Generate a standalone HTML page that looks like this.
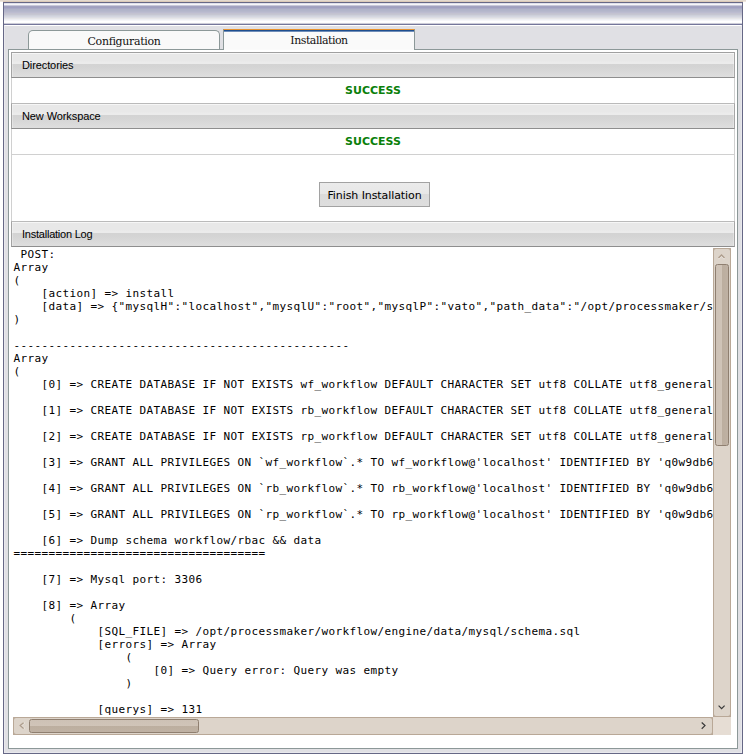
<!DOCTYPE html>
<html>
<head>
<meta charset="utf-8">
<title>Installation</title>
<style>
html,body{margin:0;padding:0;background:#fff;}
body{width:746px;height:756px;position:relative;overflow:hidden;font-family:"Liberation Sans","DejaVu Sans",sans-serif;}
.abs{position:absolute;box-sizing:border-box;}
#topstrip{left:0;top:0;width:746px;height:2px;background:linear-gradient(to bottom,#e4dad0 0,#e4dad0 1px,#dccab8 1px,#dccab8 2px);}
#win{left:3px;top:2px;width:740px;height:752px;border:1px solid #666886;background:#e0e0e4;}
#title{left:4px;top:3px;width:738px;height:21px;background:linear-gradient(to bottom,#e0e0ec 0px,#e0e0ec 1px,#f6f6f8 1px,#f6f6f8 2px,#c8c8da 2px,#c8c8da 3px,#a2a2c0 3px,#a2a2c0 4px,#a0a0c0 4px,#a0a0c0 5px,#a9a9c5 5px,#a9a9c5 6px,#b0b3c8 6px,#b0b3c8 7px,#b2b5ca 7px,#b2b5ca 8px,#b6b8cc 8px,#b6b8cc 9px,#bcbcd0 9px,#bcbcd0 10px,#c2c2d0 10px,#c2c2d0 11px,#c6c6d2 11px,#c6c6d2 12px,#cdd0da 12px,#cdd0da 13px,#d4d6e0 13px,#d4d6e0 14px,#dcdde4 14px,#dcdde4 15px,#e6e6e8 15px,#e6e6e8 16px,#eeeff3 16px,#eeeff3 17px,#f6f6f9 17px,#f6f6f9 18px,#ffffff 18px,#ffffff 19px,#fdfdfd 19px,#fdfdfd 20px,#ccccd8 20px,#ccccd8 21px);}
#titleline{left:4px;top:24px;width:738px;height:1px;background:#74769a;}
#inset{left:4px;top:25px;width:738px;height:728px;border:1px solid #e8e8ed;border-top:1px solid #fff;}
#panel{left:8px;top:49px;width:730px;height:700px;border:1px solid #8c9898;background:#fff;}
.tab{height:20px;background:#f9f9f9;border:1px solid #8c9898;border-bottom:none;font-family:"DejaVu Serif","Liberation Serif",serif;font-size:11px;text-align:center;color:#111;line-height:21px;}
#tab1{left:28px;top:30px;width:192px;height:19px;letter-spacing:-0.34px;border-radius:5px 5px 0 0;}
#tab2{left:223px;top:29px;width:192px;height:21px;border-top:1px solid #e8922e;background:#fafafa;letter-spacing:-0.5px;line-height:21px;}
#tab2 .blue{position:absolute;left:0;top:0;width:190px;height:2px;background:linear-gradient(to bottom,#1f4f8f 0,#1f4f8f 1px,#6f8db8 1px,#6f8db8 2px);}
.hdr{left:11px;width:724px;height:26px;border:1px solid;border-color:#a0a0a0 #a6a6a6 #8e8e8e #a4a4a4;box-shadow:inset 1px 0 0 rgba(255,255,255,0.3),inset -1px 0 0 rgba(255,255,255,0.3);
 background:linear-gradient(to bottom,#f6f6f6 0px,#f6f6f6 1px,#e8e8e8 1px,#e8e8e8 8px,#ebebeb 9px,#ebebeb 11px,#d3d3d3 11px,#d4d4d4 14px,#dedede 24px);
 font-size:11px;letter-spacing:-0.1px;color:#000;line-height:25px;padding-left:10px;}
#box{left:11px;top:52px;width:724px;height:195px;border-left:1px solid #d0d0d0;border-right:1px solid #d0d0d0;}
.succ{left:12px;width:722px;height:25px;text-align:center;font-family:"DejaVu Sans",sans-serif;font-weight:bold;font-size:11px;color:#0a800a;line-height:25px;}
#sep{left:12px;top:154px;width:722px;height:1px;background:#d0d0d0;}
#btn{left:319px;top:182px;width:111px;height:25px;border:1px solid #a2a2a2;background:linear-gradient(to bottom,#ebebeb 0,#e7e7e7 11px,#dbdbdb 11px,#dedede 23px);font-family:"DejaVu Sans",sans-serif;font-size:11px;color:#000;text-align:center;line-height:25px;letter-spacing:-0.08px;}
#log{left:13px;top:248px;width:700px;height:469px;overflow:hidden;background:#fff;}
#log pre{margin:0;position:absolute;left:0.5px;top:0px;font-family:"DejaVu Sans Mono","Liberation Mono",monospace;font-size:11px;line-height:13px;color:#000;letter-spacing:0.377px;white-space:pre;}
/* scrollbars */
.sb{background:#b9a897;border:1px solid #b9a897;border-radius:0.5px;}
.sb::before{content:'';position:absolute;left:0;top:0;right:0;bottom:0;border-radius:2px;background:#ddd4ca;}
#vsb{left:713px;top:248px;width:18px;height:469px;}
#hsb{left:13px;top:717px;width:700px;height:18px;}
#corner{left:713px;top:717px;width:18px;height:18px;background:#e6ddd4;}
.thumb{border:1px solid #8f7f70;border-radius:2.5px;}
#vthumb{left:715px;top:264px;width:14px;height:182px;background:linear-gradient(to right,#cdc1b5 0,#d0c4b8 6px,#bcae9f 6px,#bfb1a3 12px);}
#hthumb{left:29px;top:719px;width:170px;height:14px;background:linear-gradient(to bottom,#cdc1b5 0,#d0c4b8 6px,#bcae9f 6px,#bfb1a3 12px);}
svg.abs{overflow:visible;}
</style>
</head>
<body>
<div id="topstrip" class="abs"></div>
<div class="abs" style="left:0;top:1px;width:3px;height:1px;background:#efe7de"></div>
<div class="abs" style="left:743px;top:1px;width:3px;height:1px;background:#efe7de"></div>
<div id="win" class="abs"></div>
<div id="title" class="abs"></div>
<div id="titleline" class="abs"></div>
<div id="inset" class="abs"></div>
<div id="panel" class="abs"></div>
<div id="tab1" class="abs tab">Configuration</div>
<div id="tab2" class="abs tab"><div class="blue"></div>Installation</div>
<div class="abs" style="left:224px;top:49px;width:190px;height:1px;background:#fbfbfb"></div>
<div id="box" class="abs"></div>
<div class="abs hdr" style="top:52px">Directories</div>
<div class="abs succ" style="top:78px">SUCCESS</div>
<div class="abs hdr" style="top:103px;border-top-color:#bababa">New Workspace</div>
<div class="abs succ" style="top:129px">SUCCESS</div>
<div id="sep" class="abs"></div>
<div id="btn" class="abs">Finish Installation</div>
<div class="abs hdr" style="top:221px;border-top-color:#bababa;letter-spacing:-0.23px">Installation Log</div>
<div id="log" class="abs"><pre> POST:
Array
(
    [action] =&gt; install
    [data] =&gt; {"mysqlH":"localhost","mysqlU":"root","mysqlP":"vato","path_data":"/opt/processmaker/shared/","path_compiled":"/opt/processmaker/compiled/"}
)

------------------------------------------------
Array
(
    [0] =&gt; CREATE DATABASE IF NOT EXISTS wf_workflow DEFAULT CHARACTER SET utf8 COLLATE utf8_general_ci

    [1] =&gt; CREATE DATABASE IF NOT EXISTS rb_workflow DEFAULT CHARACTER SET utf8 COLLATE utf8_general_ci

    [2] =&gt; CREATE DATABASE IF NOT EXISTS rp_workflow DEFAULT CHARACTER SET utf8 COLLATE utf8_general_ci

    [3] =&gt; GRANT ALL PRIVILEGES ON `wf_workflow`.* TO wf_workflow@'localhost' IDENTIFIED BY 'q0w9db6x1k' WITH GRANT OPTION

    [4] =&gt; GRANT ALL PRIVILEGES ON `rb_workflow`.* TO rb_workflow@'localhost' IDENTIFIED BY 'q0w9db6x1k' WITH GRANT OPTION

    [5] =&gt; GRANT ALL PRIVILEGES ON `rp_workflow`.* TO rp_workflow@'localhost' IDENTIFIED BY 'q0w9db6x1k' WITH GRANT OPTION

    [6] =&gt; Dump schema workflow/rbac &amp;&amp; data
====================================

    [7] =&gt; Mysql port: 3306

    [8] =&gt; Array
        (
            [SQL_FILE] =&gt; /opt/processmaker/workflow/engine/data/mysql/schema.sql
            [errors] =&gt; Array
                (
                    [0] =&gt; Query error: Query was empty
                )

            [querys] =&gt; 131
</pre></div>
<div id="vsb" class="abs sb"></div>
<div id="hsb" class="abs sb"></div>
<div id="corner" class="abs"></div>
<div id="vthumb" class="abs thumb"></div>
<div id="hthumb" class="abs thumb"></div>
<svg class="abs" style="left:0;top:0" width="746" height="756" viewBox="0 0 746 756">
 <!-- up arrow (disabled) -->
 <path d="M718.5 259 L721.5 256 L724.5 259" fill="none" stroke="#ffffff" stroke-opacity="0.5" stroke-width="1.2"/>
 <path d="M718.5 258 L721.5 255 L724.5 258" fill="none" stroke="#ae9d8c" stroke-width="1.35"/>
 <!-- down arrow -->
 <path d="M718.6 705.7 L721.6 708.7 L724.6 705.7" fill="none" stroke="#383838" stroke-width="1.2"/>
 <!-- left arrow (disabled) -->
 <path d="M24.6 722.7 L21.2 725.6 L24.6 728.5" fill="none" stroke="#ffffff" stroke-opacity="0.5" stroke-width="1.2"/>
 <path d="M23.6 722.7 L20.2 725.6 L23.6 728.5" fill="none" stroke="#ae9d8c" stroke-width="1.35"/>
 <!-- right arrow -->
 <path d="M701.7 722.5 L705 725.6 L701.7 728.7" fill="none" stroke="#383838" stroke-width="1.2"/>
</svg>
</body>
</html>
